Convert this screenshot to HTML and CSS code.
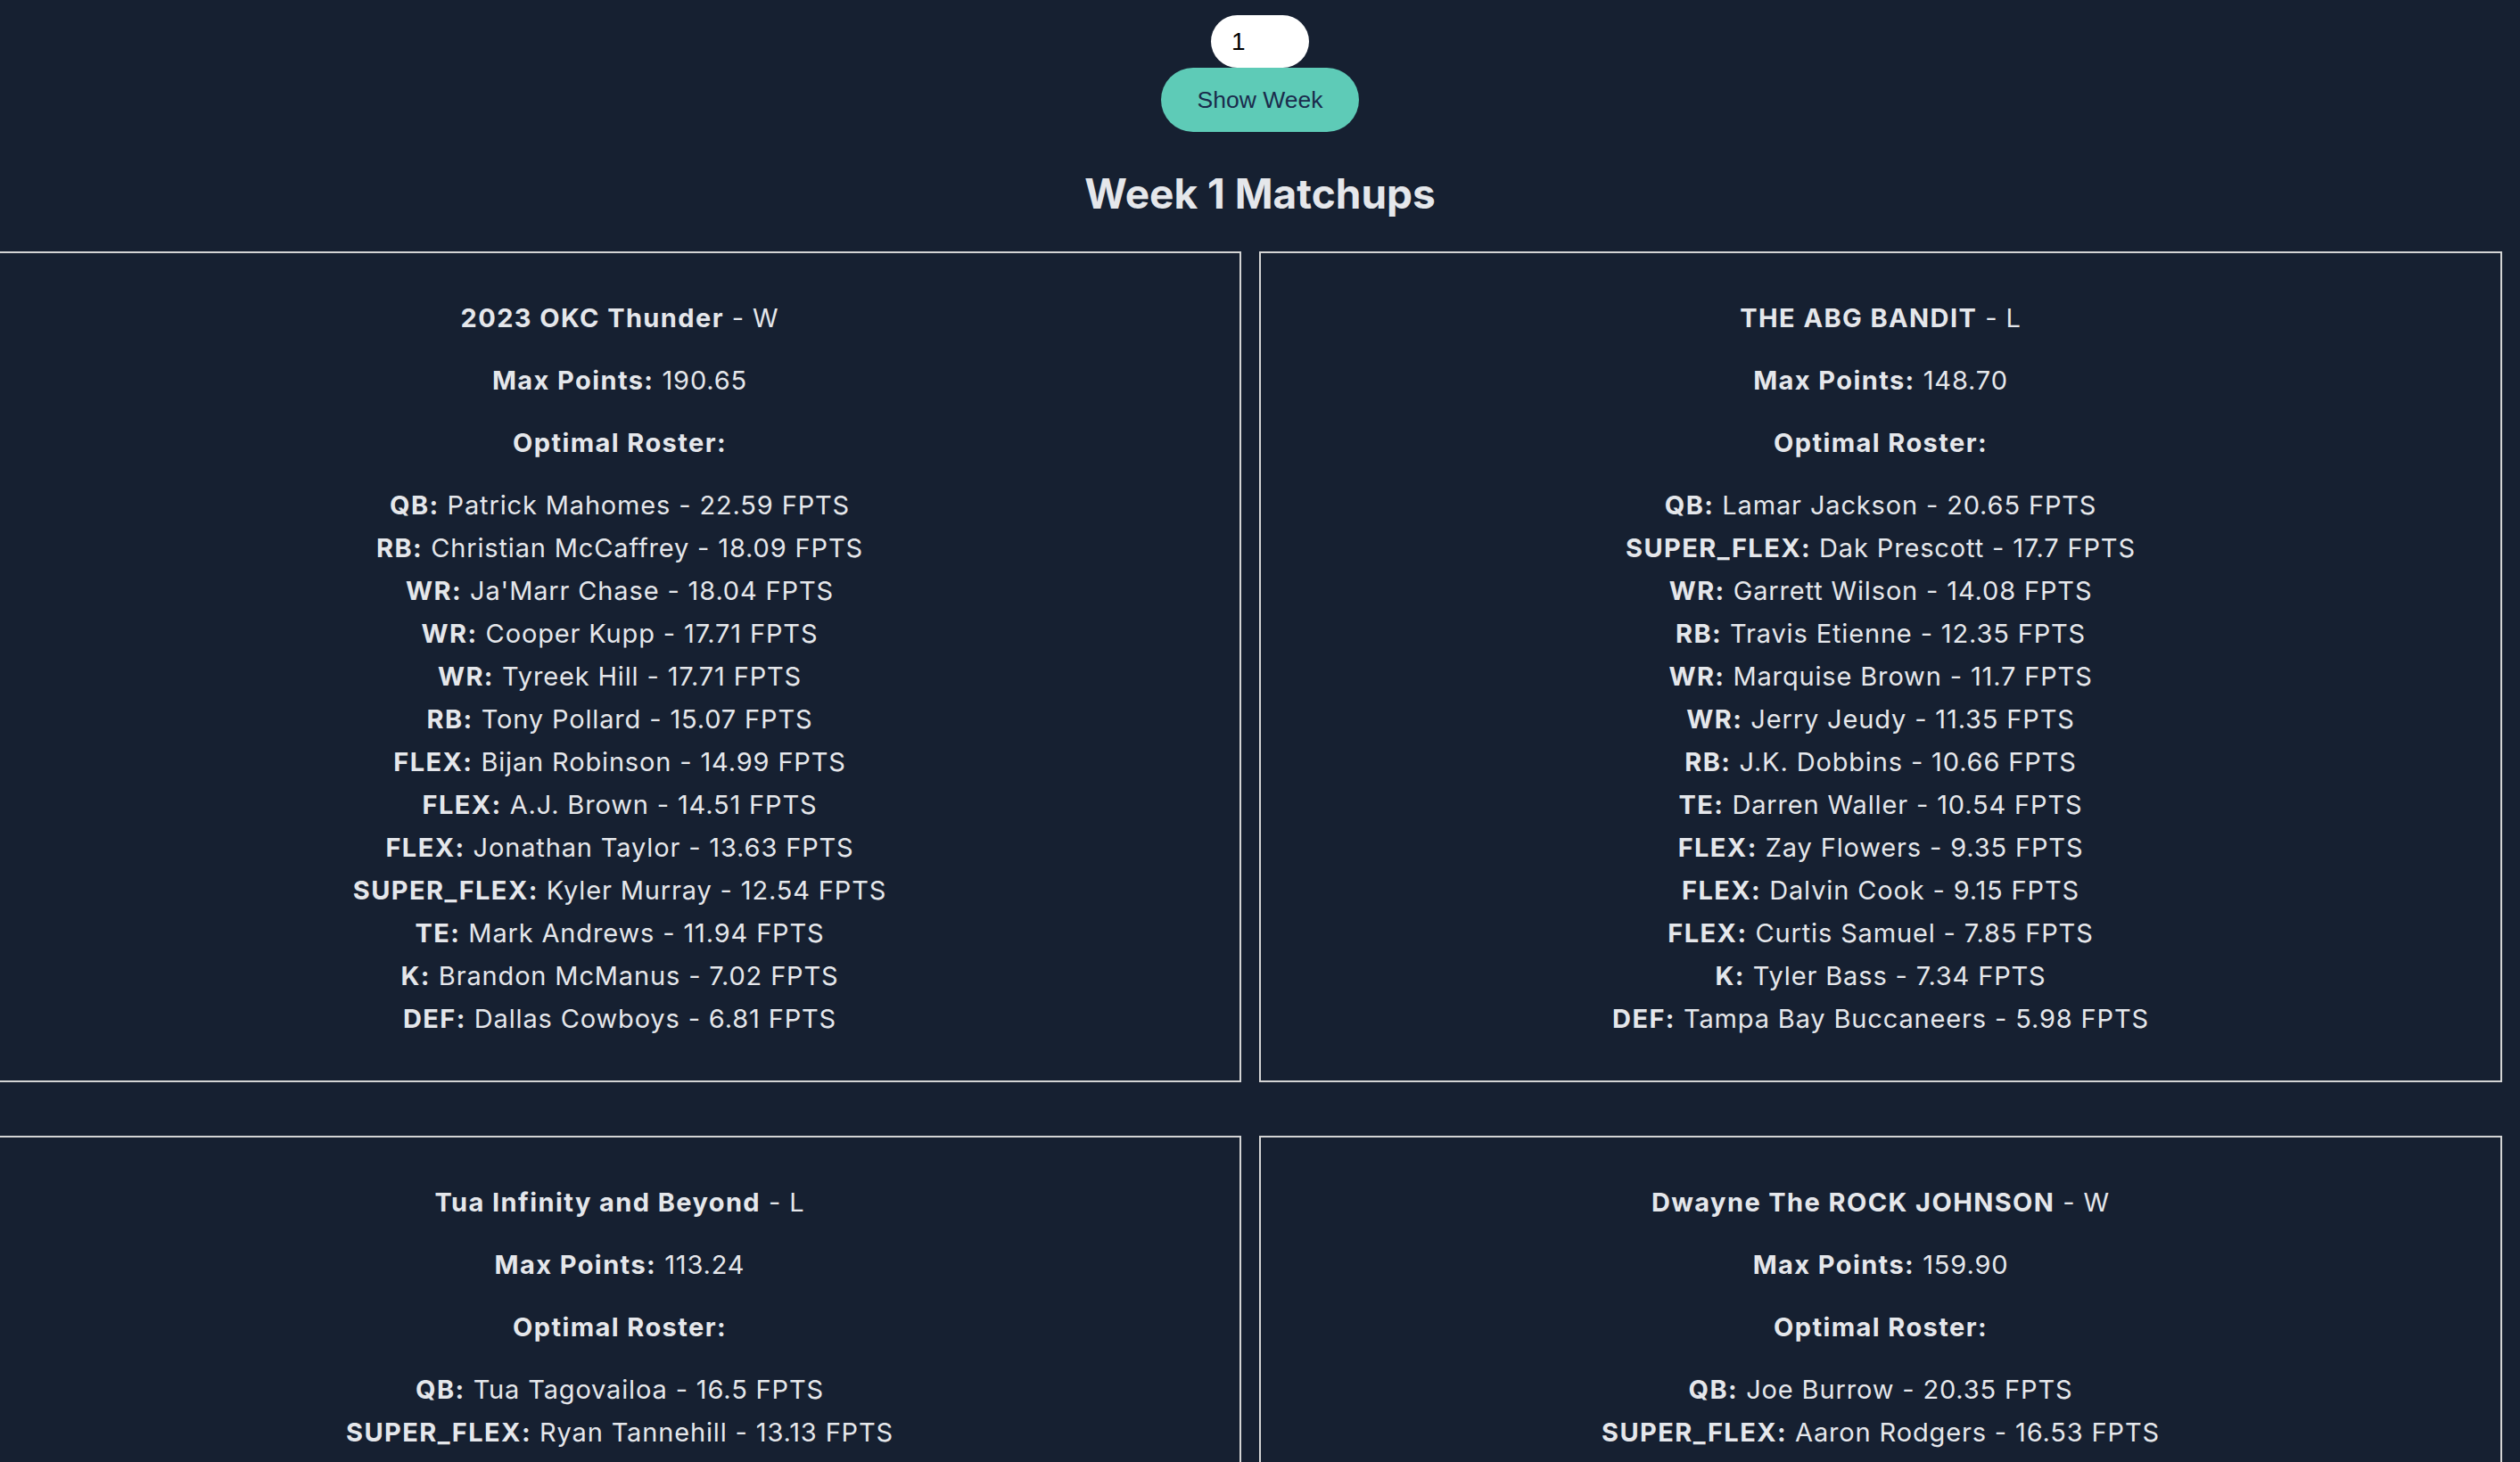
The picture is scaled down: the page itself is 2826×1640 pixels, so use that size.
FILE: index.html
```html
<!DOCTYPE html>
<html lang="en">
<head>
<meta charset="utf-8">
<title>Week 1 Matchups</title>
<link rel="stylesheet" href="styles.css">
</head>
<body>
<div class="controls">
  <input class="week-input" type="text" value="1">
  <button class="show-btn">Show Week</button>
</div>
<h2 class="page-title">Week 1 Matchups</h2>
<div class="matchups">
  <div class="card">
    <p><strong>2023 OKC Thunder</strong> - W</p>
    <p><strong>Max Points:</strong> 190.65</p>
    <p><strong>Optimal Roster:</strong></p>
    <ul class="roster">
      <li><strong>QB:</strong> Patrick Mahomes - 22.59 FPTS</li>
      <li><strong>RB:</strong> Christian McCaffrey - 18.09 FPTS</li>
      <li><strong>WR:</strong> Ja'Marr Chase - 18.04 FPTS</li>
      <li><strong>WR:</strong> Cooper Kupp - 17.71 FPTS</li>
      <li><strong>WR:</strong> Tyreek Hill - 17.71 FPTS</li>
      <li><strong>RB:</strong> Tony Pollard - 15.07 FPTS</li>
      <li><strong>FLEX:</strong> Bijan Robinson - 14.99 FPTS</li>
      <li><strong>FLEX:</strong> A.J. Brown - 14.51 FPTS</li>
      <li><strong>FLEX:</strong> Jonathan Taylor - 13.63 FPTS</li>
      <li><strong>SUPER_FLEX:</strong> Kyler Murray - 12.54 FPTS</li>
      <li><strong>TE:</strong> Mark Andrews - 11.94 FPTS</li>
      <li><strong>K:</strong> Brandon McManus - 7.02 FPTS</li>
      <li><strong>DEF:</strong> Dallas Cowboys - 6.81 FPTS</li>
    </ul>
  </div>
  <div class="card">
    <p><strong>THE ABG BANDIT</strong> - L</p>
    <p><strong>Max Points:</strong> 148.70</p>
    <p><strong>Optimal Roster:</strong></p>
    <ul class="roster">
      <li><strong>QB:</strong> Lamar Jackson - 20.65 FPTS</li>
      <li><strong>SUPER_FLEX:</strong> Dak Prescott - 17.7 FPTS</li>
      <li><strong>WR:</strong> Garrett Wilson - 14.08 FPTS</li>
      <li><strong>RB:</strong> Travis Etienne - 12.35 FPTS</li>
      <li><strong>WR:</strong> Marquise Brown - 11.7 FPTS</li>
      <li><strong>WR:</strong> Jerry Jeudy - 11.35 FPTS</li>
      <li><strong>RB:</strong> J.K. Dobbins - 10.66 FPTS</li>
      <li><strong>TE:</strong> Darren Waller - 10.54 FPTS</li>
      <li><strong>FLEX:</strong> Zay Flowers - 9.35 FPTS</li>
      <li><strong>FLEX:</strong> Dalvin Cook - 9.15 FPTS</li>
      <li><strong>FLEX:</strong> Curtis Samuel - 7.85 FPTS</li>
      <li><strong>K:</strong> Tyler Bass - 7.34 FPTS</li>
      <li><strong>DEF:</strong> Tampa Bay Buccaneers - 5.98 FPTS</li>
    </ul>
  </div>
  <div class="card">
    <p><strong>Tua Infinity and Beyond</strong> - L</p>
    <p><strong>Max Points:</strong> 113.24</p>
    <p><strong>Optimal Roster:</strong></p>
    <ul class="roster">
      <li><strong>QB:</strong> Tua Tagovailoa - 16.5 FPTS</li>
      <li><strong>SUPER_FLEX:</strong> Ryan Tannehill - 13.13 FPTS</li>
    </ul>
  </div>
  <div class="card">
    <p><strong>Dwayne The ROCK JOHNSON</strong> - W</p>
    <p><strong>Max Points:</strong> 159.90</p>
    <p><strong>Optimal Roster:</strong></p>
    <ul class="roster">
      <li><strong>QB:</strong> Joe Burrow - 20.35 FPTS</li>
      <li><strong>SUPER_FLEX:</strong> Aaron Rodgers - 16.53 FPTS</li>
    </ul>
  </div>
</div>
</body>
</html>
```

FILE: styles.css
```css
html, body {
  margin: 0;
  padding: 0;
}

body {
  background: #162031;
  color: #e5e7eb;
  font-family: Inter, "Noto Sans", "Liberation Sans", sans-serif;
  overflow: hidden;
}

.controls {
  display: flex;
  flex-direction: column;
  align-items: center;
  padding-top: 17px;
}

.week-input {
  box-sizing: border-box;
  width: 110px;
  height: 59px;
  border: none;
  border-radius: 30px;
  background: #ffffff;
  color: #000000;
  font-family: "Liberation Sans", Arial, sans-serif;
  font-size: 28px;
  padding: 0 0 0 23px;
  outline: none;
}

.show-btn {
  box-sizing: border-box;
  width: 222px;
  height: 72px;
  border: none;
  border-radius: 36px;
  background: #5ecbb7;
  color: #1a2b4c;
  font-family: "Liberation Sans", Arial, sans-serif;
  font-size: 26.5px;
  padding: 0;
  cursor: pointer;
}

.page-title {
  margin: 41px 0 37px;
  text-align: center;
  font-size: 46px;
  font-weight: 700;
  line-height: 56px;
  color: #e5e7eb;
}

.matchups {
  display: grid;
  grid-template-columns: 1fr 1fr;
  column-gap: 20px;
  row-gap: 60px;
  margin: 0 20px 0 -2px;
}

.card {
  border: 2px solid #d4d4d4;
  padding: 27px 24px 23px;
  text-align: center;
  font-size: 29px;
  line-height: 48px;
  letter-spacing: 0.85px;
}

.card p {
  margin: 22px 0;
}

.card strong {
  font-weight: 700;
  letter-spacing: 1.4px;
}

.roster {
  list-style: none;
  margin: 22px 0;
  padding: 0;
}
```
